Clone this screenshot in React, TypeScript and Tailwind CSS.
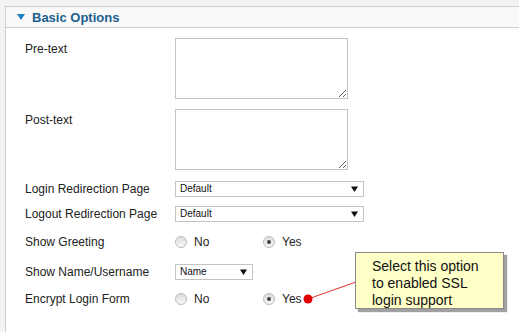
import React from "react";

const labelCls = "w-[150px] shrink-0 text-[12px] text-[#222]";

const Select = ({ value, width }: { value: string; width: string }) => (
  <div
    className={`${width} h-[16px] border border-[#c4c4c4] bg-white flex items-center justify-between pl-[4px] pr-[5px]`}
  >
    <span className="text-[10px] leading-none text-[#111]">{value}</span>
    <svg width="7" height="6" viewBox="0 0 7 6">
      <path d="M0 0.5 H7 L3.5 6 Z" fill="#111" />
    </svg>
  </div>
);

const Radio = ({ checked, label }: { checked?: boolean; label: string }) => (
  <div className="flex items-center gap-[7px]">
    <span className="w-[12px] h-[12px] rounded-full border border-[#b9b9b9] bg-gradient-to-b from-[#dcdcdc] to-[#f8f8f8] flex items-center justify-center">
      {checked && <span className="w-[4px] h-[4px] rounded-full bg-[#444]" />}
    </span>
    <span className="text-[12px] text-[#222]">{label}</span>
  </div>
);

const RadioPair = ({ yes }: { yes: boolean }) => (
  <div className="flex items-center">
    <div className="w-[88px]">
      <Radio label="No" checked={!yes} />
    </div>
    <Radio label="Yes" checked={yes} />
  </div>
);

export default function App() {
  return (
    <div className="relative w-[519px] h-[332px] overflow-hidden bg-[#f3f3f3] pt-[6px] pl-[5px] font-['Liberation_Sans',Arial,sans-serif]">
      <div className="h-full border-l border-t border-[#cfcfcf] bg-white">
        {/* Header */}
        <div className="h-[21px] bg-[#f9f9f9] border-b border-[#cfcfcf] flex items-center pl-[11px] gap-[7px]">
          <svg width="8" height="6" viewBox="0 0 8 6">
            <path d="M0 0 H8 L4 6 Z" fill="#1b7fbf" />
          </svg>
          <span className="text-[13px] font-bold text-[#1a5f8e] leading-none">
            Basic Options
          </span>
        </div>

        <div className="pl-[19px]">
          <div className="flex mt-[10px]">
            <div className={`${labelCls} pt-[2px]`}>Pre-text</div>
            <textarea className="w-[173px] h-[61px] border border-[#c4c4c4] bg-white outline-none" />
          </div>
          <div className="flex mt-[10px]">
            <div className={`${labelCls} pt-[2px]`}>Post-text</div>
            <textarea className="w-[173px] h-[61px] border border-[#c4c4c4] bg-white outline-none" />
          </div>
          <div className="flex items-center mt-[11px] h-[16px]">
            <div className={labelCls}>Login Redirection Page</div>
            <Select value="Default" width="w-[189px]" />
          </div>
          <div className="flex items-center mt-[9px] h-[16px]">
            <div className={labelCls}>Logout Redirection Page</div>
            <Select value="Default" width="w-[189px]" />
          </div>
          <div className="flex items-center mt-[12px] h-[16px]">
            <div className={labelCls}>Show Greeting</div>
            <RadioPair yes />
          </div>
          <div className="flex items-center mt-[14px] h-[16px]">
            <div className={labelCls}>Show Name/Username</div>
            <Select value="Name" width="w-[78px]" />
          </div>
          <div className="flex items-center mt-[11px] h-[16px]">
            <div className={labelCls}>Encrypt Login Form</div>
            <RadioPair yes />
          </div>
        </div>
      </div>

      {/* Annotation */}
      <svg className="absolute left-0 top-0" width="519" height="332">
        <line x1="308" y1="299" x2="356" y2="282" stroke="#e03030" strokeWidth="1" />
        <circle cx="308" cy="299" r="4.5" fill="#e00000" />
      </svg>
      <div className="absolute left-[355px] top-[252px] w-[149px] h-[57px] bg-[#ffffc8] border border-[#8a8a8a] shadow-[3px_3px_1px_#a0a0a0] pl-[16px] pt-[5px] text-[14px] leading-[17px] text-[#111]">
        Select this option
        <br />
        to enabled SSL
        <br />
        login support
      </div>
    </div>
  );
}
